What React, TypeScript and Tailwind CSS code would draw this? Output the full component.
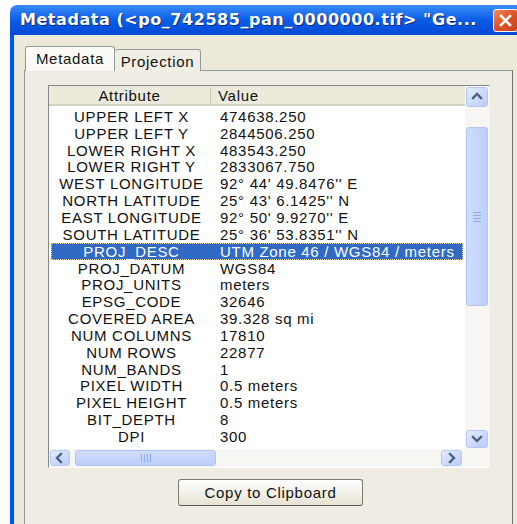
import type { ReactNode } from "react";

type Row = { attr: string; value: string };

const rows: Row[] = [
  { attr: "UPPER LEFT X", value: "474638.250" },
  { attr: "UPPER LEFT Y", value: "2844506.250" },
  { attr: "LOWER RIGHT X", value: "483543.250" },
  { attr: "LOWER RIGHT Y", value: "2833067.750" },
  { attr: "WEST LONGITUDE", value: "92° 44' 49.8476'' E" },
  { attr: "NORTH LATITUDE", value: "25° 43' 6.1425'' N" },
  { attr: "EAST LONGITUDE", value: "92° 50' 9.9270'' E" },
  { attr: "SOUTH LATITUDE", value: "25° 36' 53.8351'' N" },
  { attr: "PROJ_DESC", value: "UTM Zone 46 / WGS84 / meters" },
  { attr: "PROJ_DATUM", value: "WGS84" },
  { attr: "PROJ_UNITS", value: "meters" },
  { attr: "EPSG_CODE", value: "32646" },
  { attr: "COVERED AREA", value: "39.328 sq mi" },
  { attr: "NUM COLUMNS", value: "17810" },
  { attr: "NUM ROWS", value: "22877" },
  { attr: "NUM_BANDS", value: "1" },
  { attr: "PIXEL WIDTH", value: "0.5 meters" },
  { attr: "PIXEL HEIGHT", value: "0.5 meters" },
  { attr: "BIT_DEPTH", value: "8" },
  { attr: "DPI", value: "300" },
];

const SELECTED = 8;

/* ─── Scrollbar pieces (Luna style) ─── */

function Arrow({ dir }: { dir: "up" | "down" | "left" | "right" }) {
  const d = {
    up: "M3 8 L7 4 L11 8",
    down: "M3 5 L7 9 L11 5",
    left: "M8 3 L4 7 L8 11",
    right: "M5 3 L9 7 L5 11",
  }[dir];
  return (
    <svg width="14" height="14" viewBox="0 0 14 14">
      <path d={d} fill="none" stroke="#4D6185" strokeWidth={2.4} strokeLinecap="square" />
    </svg>
  );
}

function ScrollButton({ children, className }: { children: ReactNode; className: string }) {
  return (
    <div
      className={`flex items-center justify-center rounded-[3px] border border-[#B4C8F6] bg-linear-to-br from-[#E3EBFE] to-[#BACDF8] ${className}`}
    >
      {children}
    </div>
  );
}

function Grip({ vertical }: { vertical?: boolean }) {
  return (
    <div className={`flex ${vertical ? "flex-col gap-[2px]" : "flex-row gap-[2px]"}`}>
      {[0, 1, 2, 3].map((i) => (
        <div
          key={i}
          className={vertical ? "h-[1px] w-[8px] bg-[#8EADF1]" : "h-[8px] w-[1px] bg-[#8EADF1]"}
        />
      ))}
    </div>
  );
}

function VScroll() {
  return (
    <div className="flex w-[24px] flex-col bg-[#F7F6F2] px-[1px] pt-[1px]">
      <ScrollButton className="h-[20px]">
        <Arrow dir="up" />
      </ScrollButton>
      <div className="mt-[20px] flex h-[179px] items-center justify-center rounded-[3px] border border-[#AFC5F5] bg-linear-to-r from-[#CFDCFD] to-[#BCCFFA]">
        <Grip vertical />
      </div>
      <div className="flex-1" />
      <ScrollButton className="mb-[1px] h-[18px]">
        <Arrow dir="down" />
      </ScrollButton>
    </div>
  );
}

function HScroll() {
  return (
    <div className="flex flex-1 items-stretch bg-[#F7F6F2] py-[1px] pl-[1px]">
      <ScrollButton className="w-[20px]">
        <Arrow dir="left" />
      </ScrollButton>
      <div className="ml-[5px] flex w-[141px] items-center justify-center rounded-[3px] border border-[#AFC5F5] bg-linear-to-b from-[#CFDCFD] to-[#BCCFFA]">
        <Grip />
      </div>
      <div className="flex-1" />
      <ScrollButton className="w-[21px]">
        <Arrow dir="right" />
      </ScrollButton>
    </div>
  );
}

/* ─── Metadata list ─── */

function MetadataList() {
  return (
    <div className="flex h-[383px] w-[442px] flex-col border border-t-[#828790] border-l-[#828790] border-r-[#F4F3EE] border-b-white bg-white">
      <div className="flex min-h-0 flex-1">
        <div className="flex-1 overflow-hidden">
          <div className="flex h-[20px] items-center border-b-2 border-[#D6D2C2] bg-[#EBEADB] pt-[1px]">
            <div className="flex h-full w-[162px] items-center justify-center border-r border-[#C7C5B2]">
              Attribute
            </div>
            <div className="pl-[7px]">Value</div>
          </div>
          <div className="mt-[2px] px-[2px]">
            {rows.map((r, i) => {
              const sel = i === SELECTED;
              return (
                <div
                  key={r.attr}
                  className={`flex h-[16.85px] items-center whitespace-nowrap ${
                    sel ? "border border-dotted border-[#E7D9A6] bg-[#316AC5] text-white" : "border border-transparent"
                  }`}
                >
                  <div className="w-[159px] text-center">{r.attr}</div>
                  <div className="pl-[9px]">{r.value}</div>
                </div>
              );
            })}
          </div>
        </div>
        <VScroll />
      </div>
      <div className="flex h-[18px]">
        <HScroll />
        <div className="w-[27px] bg-[#F7F6F2]" />
      </div>
    </div>
  );
}

/* ─── Dialog window ─── */

export default function App() {
  return (
    <div
      className="h-[524px] w-[517px] overflow-hidden bg-white pl-[10px] pt-[5px] text-[15px] leading-none tracking-[0.7px] text-[#111]"
      style={{ fontFamily: '"Liberation Sans", Arial, sans-serif' }}
    >
      <div className="flex h-[540px] w-[512px] flex-col overflow-hidden rounded-tl-[7px]">
        {/* Title bar */}
        <div className="flex h-[30px] shrink-0 items-center justify-between bg-linear-to-b from-[#3A8CF7] via-[#0A5DE8] to-[#0449D6] pl-[10px] pr-[4px]">
          <span
            className="whitespace-nowrap text-[16px] font-bold tracking-[0.55px] text-white"
            style={{ fontFamily: '"DejaVu Sans", Verdana, sans-serif', textShadow: "1px 1px 0 #0A2A8A" }}
          >
            Metadata (&lt;po_742585_pan_0000000.tif&gt; "Ge...
          </span>
          <div className="flex h-[23px] w-[25px] items-center justify-center rounded-[3px] border border-white bg-linear-to-br from-[#F08A60] via-[#DE5127] to-[#C8421C]">
            <svg width="13" height="13" viewBox="0 0 13 13">
              <path d="M2 2 L11 11 M11 2 L2 11" stroke="white" strokeWidth={2.6} strokeLinecap="square" />
            </svg>
          </div>
        </div>

        {/* Client area */}
        <div className="flex flex-1 flex-col border-l-4 border-[#0055EA] bg-[#ECE9D8] pl-[10px] pt-[11px]">
          {/* Tabs */}
          <div className="relative z-10 flex h-[25px] items-end pl-[1px]">
            <div className="flex h-[25px] w-[90px] items-center justify-center rounded-t-[3px] border border-b-0 border-[#919B9C] bg-[#FBFAF6] pb-[2px]">
              Metadata
            </div>
            <div className="flex h-[22px] w-[86px] items-center justify-center rounded-t-[3px] border border-l-0 border-b-0 border-[#919B9C] bg-[#F1EFE4] pt-[1px]">
              Projection
            </div>
          </div>

          {/* Tab page */}
          <div className="-mt-[1px] flex w-[489px] flex-1 flex-col border border-r-[#6E7272] border-[#919B9C] bg-[#EFEDE3] pl-[23px] pt-[14px]">
            <MetadataList />
            <div className="ml-[130px] mt-[11px] flex h-[27px] w-[185px] items-center justify-center rounded-[3px] border border-[#7A7A6E] border-b-[#5C5C52] bg-linear-to-b from-[#FFFFFF] to-[#E6E3D4] text-[#111]">
              Copy to Clipboard
            </div>
          </div>
        </div>
      </div>
    </div>
  );
}
